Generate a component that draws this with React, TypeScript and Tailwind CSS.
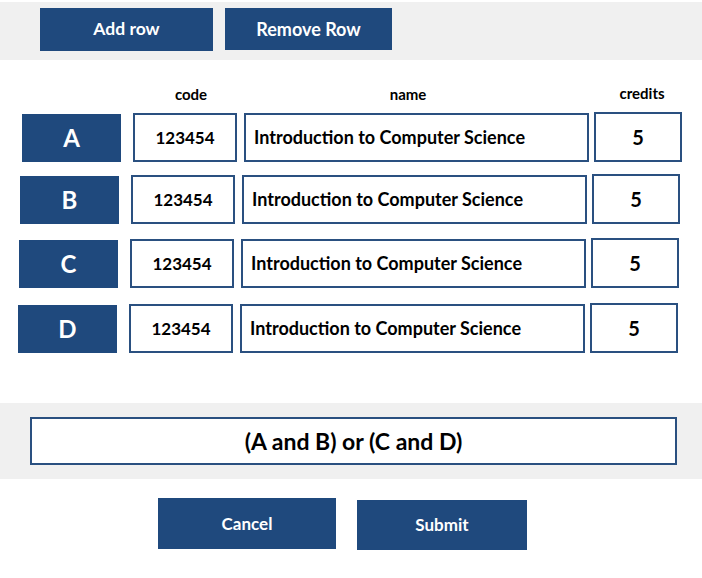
import React from 'react';

type Course = {
  letter: string;
  code: string;
  name: string;
  credits: string;
  offset: string;
  top: string;
};

const courses: Course[] = [
  { letter: 'A', code: '123454', name: 'Introduction to Computer Science', credits: '5', offset: 'ml-[22px]', top: 'mt-[11px]' },
  { letter: 'B', code: '123454', name: 'Introduction to Computer Science', credits: '5', offset: 'ml-[20px]', top: 'mt-[13px]' },
  { letter: 'C', code: '123454', name: 'Introduction to Computer Science', credits: '5', offset: 'ml-[19px]', top: 'mt-[15px]' },
  { letter: 'D', code: '123454', name: 'Introduction to Computer Science', credits: '5', offset: 'ml-[18px]', top: 'mt-[16px]' },
];

const btn = 'bg-[#1f497d] text-white font-bold flex items-center justify-center';

function CourseRow({ course }: { course: Course }) {
  return (
    <div className={`flex h-[49px] ${course.offset} ${course.top}`}>
      <div className={`${btn} w-[99px] h-[48px] mt-[1px] text-[24px]`}>{course.letter}</div>
      <div className="ml-[12px] w-[104px] border-2 border-[#2a5080] flex items-center justify-center text-[17px] font-bold text-black">
        {course.code}
      </div>
      <div className="ml-[7px] w-[345px] border-2 border-[#2a5080] flex items-center pl-[8px] text-[18px] font-bold text-black">
        {course.name}
      </div>
      <div className="ml-[5px] w-[88px] border-2 border-[#2a5080] flex items-center justify-center text-[20px] font-bold text-black -mt-[1px]">
        {course.credits}
      </div>
    </div>
  );
}

export default function App() {
  return (
    <div
      className="w-[702px] h-[578px] bg-white pt-[2px] overflow-hidden"
      style={{ fontFamily: 'Lato, "Open Sans", sans-serif' }}
    >
      {/* toolbar */}
      <div className="bg-[#f0f0f0] h-[58px] pt-[6px] pl-[40px] flex gap-[12px] items-start">
        <button className={`${btn} w-[173px] h-[43px] text-[17.5px]`}>Add row</button>
        <button className={`${btn} w-[167px] h-[42px] text-[18px]`}>Remove Row</button>
      </div>

      {/* headers */}
      <div className="flex mt-[27px] h-[15px] text-[15px] font-bold text-black leading-none">
        <div className="ml-[173px] w-[36px] text-center">code</div>
        <div className="ml-[177px] w-[44px] text-center">name</div>
        <div className="ml-[186px] w-[52px] text-center -mt-[1px]">credits</div>
      </div>

      {/* course rows */}
      <div className="flex flex-col">
        {courses.map((c) => (
          <CourseRow key={c.letter} course={c} />
        ))}
      </div>

      {/* expression */}
      <div className="mt-[50px] bg-[#f0f0f0] h-[76px] pt-[14px] pl-[30px]">
        <div className="w-[647px] h-[48px] bg-white border-2 border-[#2a5080] flex items-center justify-center text-[23px] font-bold text-black">
          (A and B) or (C and D)
        </div>
      </div>

      {/* actions */}
      <div className="flex mt-[19px] pl-[158px] gap-[21px] items-start">
        <button className={`${btn} w-[178px] h-[51px] text-[17px]`}>Cancel</button>
        <button className={`${btn} w-[170px] h-[50px] mt-[2px] text-[17px]`}>Submit</button>
      </div>
    </div>
  );
}
